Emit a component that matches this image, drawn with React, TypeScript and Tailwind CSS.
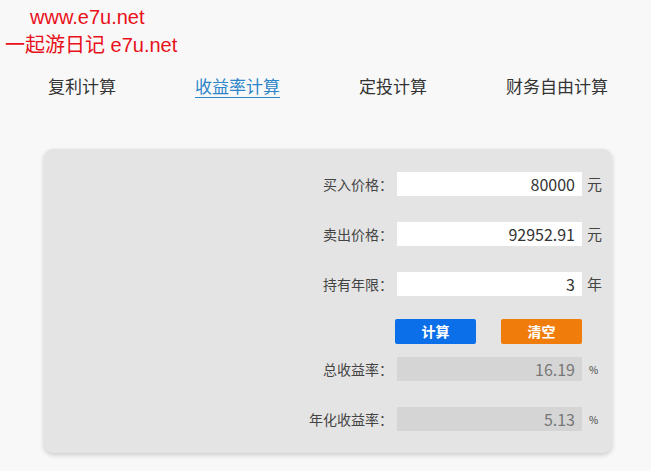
import React from 'react';

const tabs = [
  { name: '复利计算', active: false },
  { name: '收益率计算', active: true },
  { name: '定投计算', active: false },
  { name: '财务自由计算', active: false },
];

const inputs = [
  { label: '买入价格：', value: '80000', unit: '元' },
  { label: '卖出价格：', value: '92952.91', unit: '元' },
  { label: '持有年限：', value: '3', unit: '年' },
];

const results = [
  { label: '总收益率：', value: '16.19' },
  { label: '年化收益率：', value: '5.13' },
];

const cjk = "font-['Noto_Sans_CJK_SC','Noto_Sans',sans-serif]";

function Row({ label, children }: { label: string; children: React.ReactNode }) {
  return (
    <div className="flex items-center h-[24px]">
      <div className="w-[353px] text-right text-[14px] text-[#444] pr-[4px]">{label}</div>
      {children}
    </div>
  );
}

export default function App() {
  return (
    <div className={`relative w-[651px] h-[471px] bg-[#f8f8f8] overflow-hidden ${cjk}`}>
      {/* watermark */}
      <div className="absolute left-0 top-0 text-[20px] leading-[28px] text-[#e8101a] font-['Liberation_Sans','Noto_Sans_CJK_SC',sans-serif]">
        <div className="pl-[30px] pt-[3px]">www.e7u.net</div>
        <div className="pl-[5px]">一起游日记 e7u.net</div>
      </div>

      {/* tabs */}
      <div className="flex gap-[79px] pl-[48px] pt-[75px] text-[17px] leading-[22px]">
        {tabs.map((t) => (
          <div
            key={t.name}
            className={t.active ? 'text-[#2d85c9] border-b border-[#2d85c9]' : 'text-[#333]'}
          >
            {t.name}
          </div>
        ))}
      </div>

      {/* card */}
      <div className="ml-[44px] mt-[51px] w-[568px] rounded-[9px] bg-[#e4e4e4] shadow-[0_2px_5px_rgba(0,0,0,0.18)] pt-[23px] pb-[22px] flex flex-col">
        <div className="flex flex-col gap-[26px]">
          {inputs.map((r) => (
            <Row key={r.label} label={r.label}>
              <div className="w-[185px] h-[24px] bg-white text-right pr-[7px] text-[16px] leading-[24px] text-[#333]">
                {r.value}
              </div>
              <div className="ml-[5px] text-[15px] text-[#444]">{r.unit}</div>
            </Row>
          ))}
        </div>

        <div className="flex gap-[25px] pl-[351px] mt-[23px]">
          <div className="w-[81px] h-[25px] rounded-[2px] bg-[#0a6fe8] text-white text-[14px] font-bold leading-[25px] text-center">计算</div>
          <div className="w-[81px] h-[25px] rounded-[2px] bg-[#f07d0b] text-white text-[14px] font-bold leading-[25px] text-center">清空</div>
        </div>

        <div className="flex flex-col gap-[26px] mt-[13px]">
          {results.map((r) => (
            <Row key={r.label} label={r.label}>
              <div className="w-[185px] h-[24px] bg-[#d5d5d5] rounded-[1px] text-right pr-[7px] text-[16px] leading-[24px] text-[#777]">
                {r.value}
              </div>
              <div className="ml-[7px] text-[10px] text-[#444]">%</div>
            </Row>
          ))}
        </div>
      </div>
    </div>
  );
}
